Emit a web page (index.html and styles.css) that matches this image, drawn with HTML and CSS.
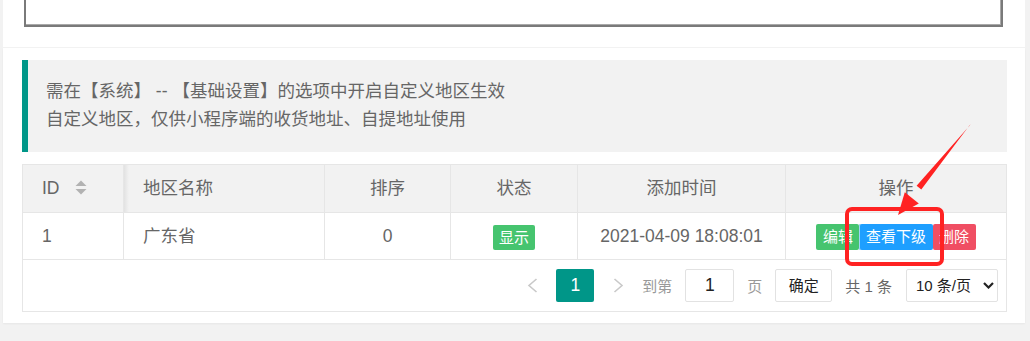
FILE: index.html
```html
<!DOCTYPE html>
<html lang="zh-CN">
<head>
    <meta charset="UTF-8">
    <title>自定义地区</title>
    <link rel="stylesheet" href="styles.css">
</head>
<body>
    <div class="page">
        <div class="card card-top">
            <div class="editor-box"></div>
        </div>

        <div class="card card-main">
            <blockquote class="quote">需在【系统】 -- 【基础设置】的选项中开启自定义地区生效<br>自定义地区，仅供小程序端的收货地址、自提地址使用</blockquote>

            <div class="table-box">
                <table class="data-table">
                    <colgroup>
                        <col style="width:101px">
                        <col style="width:201px">
                        <col style="width:126px">
                        <col style="width:127px">
                        <col style="width:208px">
                        <col>
                    </colgroup>
                    <thead>
                        <tr>
                            <th class="left">ID
                                <svg class="sort" width="12" height="15" viewBox="0 0 12 15">
                                    <polygon points="0.5,6 6,0.5 11.5,6" fill="#b2b2b2"/>
                                    <polygon points="0.5,9 11.5,9 6,14.5" fill="#b2b2b2"/>
                                </svg>
                            </th>
                            <th class="left shade">地区名称</th>
                            <th>排序</th>
                            <th>状态</th>
                            <th>添加时间</th>
                            <th class="last">操作</th>
                        </tr>
                    </thead>
                    <tbody>
                        <tr>
                            <td class="left">1</td>
                            <td class="left">广东省</td>
                            <td>0</td>
                            <td><span class="badge">显示</span></td>
                            <td>2021-04-09 18:08:01</td>
                            <td class="last"><span class="btn btn-green">编辑</span><span class="btn btn-blue">查看下级</span><span class="btn btn-red">删除</span></td>
                        </tr>
                    </tbody>
                </table>

                <div class="table-page">
                    <span class="pg-arrow">
                        <svg width="11" height="15" viewBox="0 0 11 15"><polyline points="9.5,1 2,7.5 9.5,14" fill="none" stroke="#c9c9c9" stroke-width="1.6"/></svg>
                    </span>
                    <span class="pg-current">1</span>
                    <span class="pg-arrow">
                        <svg width="11" height="15" viewBox="0 0 11 15"><polyline points="1.5,1 9,7.5 1.5,14" fill="none" stroke="#c9c9c9" stroke-width="1.6"/></svg>
                    </span>
                    <span class="pg-text pg-muted">到第</span>
                    <span class="pg-input">1</span>
                    <span class="pg-text pg-muted">页</span>
                    <span class="pg-btn">确定</span>
                    <span class="pg-text">共 1 条</span>
                    <span class="pg-select">10 条/页
                        <svg width="11" height="7" viewBox="0 0 11 7"><polyline points="1,1 5.5,5.5 10,1" fill="none" stroke="#222" stroke-width="2.2"/></svg>
                    </span>
                </div>
            </div>
        </div>

        <!-- red annotation drawn over the screenshot -->
        <svg class="mark" width="1030" height="341" viewBox="0 0 1030 341">
            <rect x="847" y="209" width="95" height="55" rx="5" fill="none" stroke="#ff2222" stroke-width="4"/>
            <polygon points="970.6,124.6 969.4,125.4 921.3,189.5 916.6,185.7" fill="#ff2222"/>
            <polygon points="898,215 904.8,192.2 918.8,203.6" fill="#ff2222"/>
        </svg>
    </div>
</body>
</html>
```

FILE: styles.css
```css
body {
    margin: 0;
    background-color: #f2f2f2;
    font-family: "Liberation Sans", "Noto Sans CJK SC", sans-serif;
    color: #666;
}
.page {
    position: relative;
    width: 1030px;
    height: 341px;
    padding: 0 5px 0 3px;
    box-sizing: border-box;
    overflow: hidden;
}
.card {
    background: #fff;
}
.card-top {
    height: 47px;
    padding: 0 22px 0 21px;
    box-sizing: border-box;
}
.editor-box {
    height: 27px;
    box-sizing: border-box;
    border: 2px solid #7a7a7a;
    border-top: none;
    box-shadow: inset -1px -1px 0 #a9a9a9;
}
.card-main {
    margin-top: 1px;
    padding: 12px 18px 11px 19px;
    box-shadow: 0 1px 2px rgba(0, 0, 0, 0.05);
}
.quote {
    margin: 0;
    padding: 18px 18px 19px 18px;
    border-left: 6px solid #009688;
    background: #f2f2f2;
    font-size: 17.5px;
    line-height: 27.5px;
    color: #666;
}
.table-box {
    margin-top: 12px;
    border: 1px solid #e6e6e6;
}
.data-table {
    width: 100%;
    table-layout: fixed;
    border-collapse: separate;
    border-spacing: 0;
    font-size: 17.5px;
}
.data-table th,
.data-table td {
    padding: 0 19px;
    text-align: center;
    border-right: 1px solid #e6e6e6;
    border-bottom: 1px solid #e6e6e6;
    white-space: nowrap;
    color: #666;
}
.data-table th {
    line-height: 47px;
    font-weight: normal;
    background: #f2f2f2;
}
.data-table td {
    line-height: 46px;
}
.data-table .left {
    text-align: left;
}
.data-table .last {
    border-right: none;
    padding: 0;
}
.data-table .shade {
    background: linear-gradient(to right, #e2e2e2, #f2f2f2 5px);
}
.sort {
    vertical-align: -1px;
    margin-left: 11px;
}
.badge {
    display: inline-block;
    height: 25px;
    line-height: 25px;
    padding: 0 6px;
    background: #46c46f;
    color: #fff;
    font-size: 15px;
    border-radius: 2px;
    vertical-align: middle;
}
.btn {
    display: inline-block;
    height: 26px;
    line-height: 26px;
    padding: 0 6.5px;
    color: #fff;
    font-size: 15px;
    border-radius: 2px;
    vertical-align: middle;
}
.btn-green {
    background: #46c46f;
}
.btn-blue {
    background: #1e9fff;
    box-shadow: inset 1px 0 0 #9fd3f7;
}
.btn-red {
    background: #f04e63;
}
.table-page {
    height: 51px;
    display: flex;
    align-items: center;
    justify-content: flex-end;
    padding-right: 8px;
    font-size: 15px;
}
.pg-arrow {
    width: 38px;
    height: 33px;
    display: flex;
    align-items: center;
    justify-content: center;
    margin-left: 5px;
}
.pg-current {
    width: 38px;
    height: 33px;
    line-height: 33px;
    text-align: center;
    background: #009688;
    color: #fff;
    border-radius: 2px;
    font-size: 17.5px;
    margin-left: 5px;
}
.pg-text {
    margin-left: 13px;
    color: #666;
}
.pg-muted {
    color: #999;
}
.pg-arrow + .pg-text {
    margin-left: 5px;
}
.pg-input,
.pg-btn,
.pg-select {
    height: 33px;
    box-sizing: border-box;
    border: 1px solid #e2e2e2;
    border-radius: 2px;
    line-height: 31px;
    color: #222;
    margin-left: 13px;
}
.pg-input {
    width: 49px;
    text-align: center;
    font-size: 17.5px;
}
.pg-btn {
    width: 57px;
    text-align: center;
}
.pg-select {
    width: 92px;
    padding-left: 9px;
    display: flex;
    align-items: center;
    margin-left: 14px;
}
.pg-select svg {
    margin-left: 12px;
}
.mark {
    position: absolute;
    top: 0;
    left: 0;
    pointer-events: none;
}
```
